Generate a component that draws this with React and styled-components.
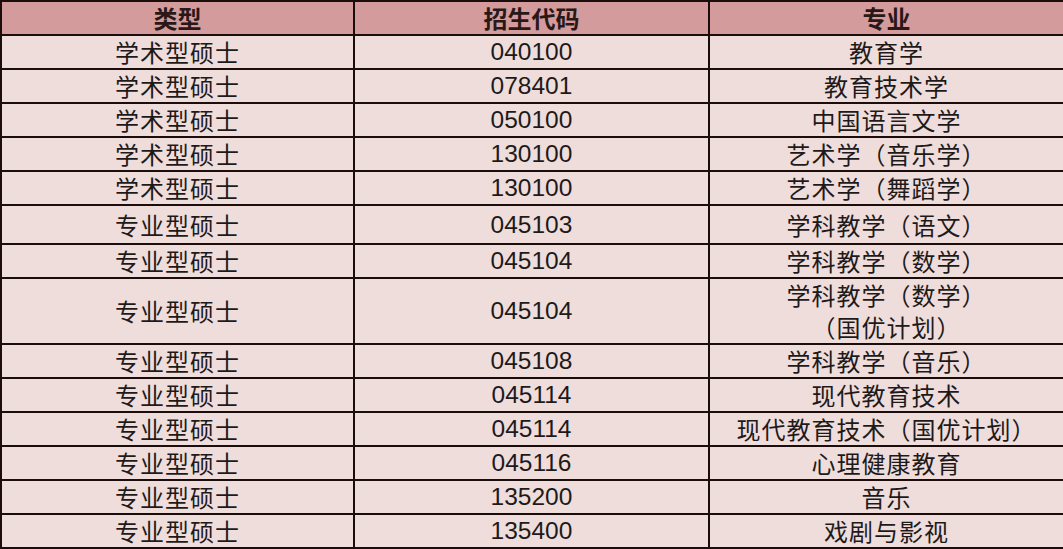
import styled, { createGlobalStyle } from 'styled-components';

const GlobalStyle = createGlobalStyle`
  html, body {
    margin: 0;
    padding: 0;
    background: #ffffff;
  }
`;

const rows = [
  ['学术型硕士', '040100', ['教育学']],
  ['学术型硕士', '078401', ['教育技术学']],
  ['学术型硕士', '050100', ['中国语言文学']],
  ['学术型硕士', '130100', ['艺术学（音乐学）']],
  ['学术型硕士', '130100', ['艺术学（舞蹈学）']],
  ['专业型硕士', '045103', ['学科教学（语文）'], 39],
  ['专业型硕士', '045104', ['学科教学（数学）']],
  ['专业型硕士', '045104', ['学科教学（数学）', '（国优计划）'], 66],
  ['专业型硕士', '045108', ['学科教学（音乐）']],
  ['专业型硕士', '045114', ['现代教育技术']],
  ['专业型硕士', '045114', ['现代教育技术（国优计划）']],
  ['专业型硕士', '045116', ['心理健康教育']],
  ['专业型硕士', '135200', ['音乐']],
  ['专业型硕士', '135400', ['戏剧与影视']],
];

const Table = styled.table`
  width: 1063px;
  border-collapse: collapse;
  table-layout: fixed;
  background: #efdddc;
  color: #1e1a1a;
`;

const Col = styled.col`
  width: ${p => p.$w}px;
`;

const Row = styled.tr`
  height: ${p => p.$h || 34}px;
`;

const HeadCell = styled.th`
  background: #d39b9b;
  border: 2px solid #1c0d0d;
  padding: 0;
  text-align: center;
  font-family: "Noto Sans CJK SC", sans-serif;
  font-size: 24px;
  font-weight: 700;
  line-height: 28px;
  color: #2a1818;
`;

const Cell = styled.td`
  border: 2px solid #1c0d0d;
  padding: 0;
  text-align: center;
  vertical-align: middle;
  font-family: ${p => (p.$num ? '"Liberation Sans", Arial, sans-serif' : '"Noto Sans CJK SC", sans-serif')};
  font-size: ${p => (p.$num ? 24.5 : 24)}px;
  letter-spacing: ${p => (p.$num ? 0 : 1)}px;
  font-weight: 400;
  line-height: ${p => (p.$num ? 28 : 32)}px;
`;

const Line = styled.div`
  white-space: nowrap;
`;

export default function App() {
  return (
    <>
      <GlobalStyle />
      <Table>
        <colgroup>
          <Col $w={353} />
          <Col $w={355} />
          <Col $w={355} />
        </colgroup>
        <thead>
          <Row $h={34}>
            <HeadCell>类型</HeadCell>
            <HeadCell>招生代码</HeadCell>
            <HeadCell>专业</HeadCell>
          </Row>
        </thead>
        <tbody>
          {rows.map(([type, code, major, h], i) => (
            <Row key={i} $h={h}>
              <Cell>{type}</Cell>
              <Cell $num>{code}</Cell>
              <Cell>
                {major.map(line => (
                  <Line key={line}>{line}</Line>
                ))}
              </Cell>
            </Row>
          ))}
        </tbody>
      </Table>
    </>
  );
}
